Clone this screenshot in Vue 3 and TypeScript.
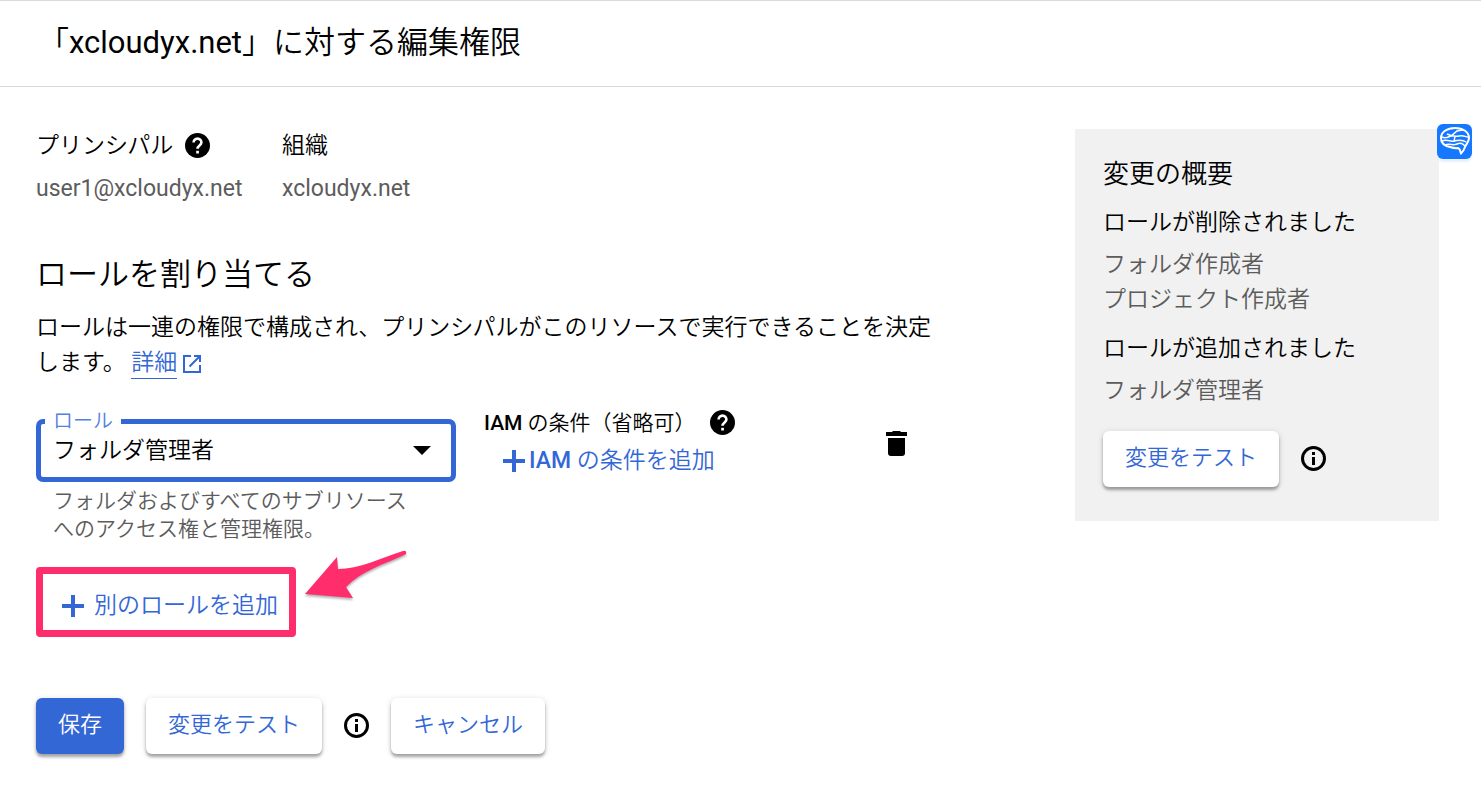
<script setup lang="ts">
import { ref } from 'vue'

const role = ref('フォルダ管理者')
const removedRoles: string[] = ['フォルダ作成者', 'プロジェクト作成者']
const addedRoles: string[] = ['フォルダ管理者']
</script>

<template>
  <div class="page">
    <header class="header">
      <h1 class="title">「<span class="latin">xcloudyx.net</span>」に対する編集権限</h1>
    </header>

    <div class="body">
      <main class="main">
        <dl class="facts">
          <div>
            <dt>
              プリンシパル
              <button class="icon-button" type="button" aria-label="プリンシパルのヘルプ">
                <svg class="round-icon" viewBox="0 0 25 25"><circle cx="12.5" cy="12.5" r="12.500" /><path class="mark" d="M8.600 9.500a3.900 3.900 0 0 1 7.800 0c0 2.800-3.900 3.100-3.900 6.300" /><path class="dot" d="M11.200 17.800h2.700v2.700h-2.700z" /></svg>
              </button>
            </dt>
            <dd class="latin">user1@xcloudyx.net</dd>
          </div>
          <div>
            <dt>組織</dt>
            <dd class="latin">xcloudyx.net</dd>
          </div>
        </dl>

        <h2 class="section-title">ロールを割り当てる</h2>
        <p class="description">
          ロールは一連の権限で構成され、プリンシパルがこのリソースで実行できることを決定します。
          <a class="link" href="#"><span class="link-text">詳細</span><svg class="external" viewBox="0 0 18 18"><path d="M8 1H1v16h16v-7M11 1h6v6M17 1L6.500 11.500" /></svg></a>
        </p>

        <div class="role-row">
          <div class="role">
            <div class="field">
              <label class="field-label" for="role">ロール</label>
              <select id="role" v-model="role" class="select">
                <option>フォルダ管理者</option>
              </select>
              <svg class="caret" viewBox="0 0 18 9"><path d="M0 0h18L9 9z" /></svg>
            </div>
            <p class="hint">フォルダおよびすべてのサブリソースへのアクセス権と管理権限。</p>
          </div>

          <div class="condition">
            <div class="condition-title">
              <span><span class="medium">IAM</span> の条件（省略可）</span>
              <button class="icon-button" type="button" aria-label="条件のヘルプ">
                <svg class="round-icon" viewBox="0 0 25 25"><circle cx="12.5" cy="12.5" r="12.500" /><path class="mark" d="M8.600 9.500a3.900 3.900 0 0 1 7.800 0c0 2.800-3.900 3.100-3.900 6.300" /><path class="dot" d="M11.200 17.800h2.700v2.700h-2.700z" /></svg>
              </button>
            </div>
            <button class="text-button add-condition" type="button">
              <svg class="plus" viewBox="0 0 22 22"><path d="M11 0v22M0 11h22" /></svg>
              <span><span class="medium">IAM</span> の条件を追加</span>
            </button>
          </div>

          <button class="icon-button delete" type="button" aria-label="ロールを削除">
            <svg class="trash" viewBox="0 0 21 25"><path d="M7 0h7l1 1h6v4H0V1h6zM2 7h17v15a3 3 0 0 1-3 3H5a3 3 0 0 1-3-3z" /></svg>
          </button>
        </div>

        <div class="callout">
          <button class="text-button add-role" type="button">
            <svg class="plus" viewBox="0 0 22 22"><path d="M11 0v22M0 11h22" /></svg>
            <span>別のロールを追加</span>
          </button>
          <svg class="arrow" viewBox="0 0 106 56" aria-hidden="true">
            <path d="M2 44L34 7l1 12C56 19 78 8 100 1q4-1 3 3C82 14 58 21 43 37l7 11z" />
          </svg>
        </div>

        <div class="actions">
          <button class="button primary" type="button">保存</button>
          <button class="button" type="button">変更をテスト</button>
          <button class="icon-button" type="button" aria-label="テストの詳細">
            <svg class="round-icon" viewBox="0 0 25 25"><circle class="ring" cx="12.5" cy="12.5" r="11" /><path d="M11 6h3v3h-3zM11 11h3v8h-3z" /></svg>
          </button>
          <button class="button" type="button">キャンセル</button>
        </div>
      </main>

      <aside class="summary">
        <h2 class="summary-title">変更の概要</h2>
        <h3 class="summary-heading">ロールが削除されました</h3>
        <ul class="roles">
          <li v-for="name in removedRoles" :key="name">{{ name }}</li>
        </ul>
        <h3 class="summary-heading added">ロールが追加されました</h3>
        <ul class="roles">
          <li v-for="name in addedRoles" :key="name">{{ name }}</li>
        </ul>
        <div class="actions summary-actions">
          <button class="button" type="button">変更をテスト</button>
          <button class="icon-button" type="button" aria-label="テストの詳細">
            <svg class="round-icon" viewBox="0 0 25 25"><circle class="ring" cx="12.5" cy="12.5" r="11" /><path d="M11 6h3v3h-3zM11 11h3v8h-3z" /></svg>
          </button>
        </div>
        <button class="assistant" type="button" aria-label="アシスタント">
          <svg viewBox="0 0 35 35">
            <path class="outline" d="M24 29.500c-1-2 0-4-3-5.500-3 .5-5 0-8-1-5-1-9-4-9-9C4 8 10 4 18 4s14 4 14 10c0 4-3 6-4 9-1 3-2 5-4 6.500z" />
            <path d="M5 13c4 2 6 0 9-1l6-5 6-1M10 10c4 2 7 3 12 2s6 1 9 1M5 17c6-2 8 1 12 0s8-2 12 1M8 21c5-2 8 1 12-1s6 0 8 2M18 12l-1 6" />
          </svg>
        </button>
      </aside>
    </div>
  </div>
</template>

<style>
body {
  margin: 0;
  background: #fff;
}
</style>

<style scoped>
.page {
  font-family: Roboto, "Noto Sans CJK JP", sans-serif;
  font-size: 23px;
  font-weight: 350;
  line-height: 35px;
  color: #000;
}
.page * {
  box-sizing: border-box;
}
h1, h2, h3, p, dl, dd, ul {
  margin: 0;
  padding: 0;
  font-weight: inherit;
}
button, select {
  margin: 0;
  font: inherit;
  color: inherit;
}
svg {
  display: block;
  flex: none;
}
.latin {
  font-weight: 400;
}
.medium {
  font-weight: 500;
}
.header {
  padding: 21px 38px 23px;
  border-top: 1px solid #dadada;
  border-bottom: 1px solid #dadada;
}
.title {
  font-size: 31px;
  line-height: 41px;
}
.body {
  display: grid;
  grid-template-columns: minmax(0, 1fr) 364px;
  align-items: start;
  gap: 132px;
  padding: 42px 42px 32px 36px;
}
.facts {
  display: grid;
  grid-template-columns: 246px auto;
  line-height: 34px;
}
.facts dt {
  display: flex;
  align-items: center;
  gap: 12px;
}
.facts dd {
  margin-top: 9px;
  color: #5c5c5c;
}
.icon-button {
  flex: none;
  padding: 0 0 2px;
  border: 0;
  background: none;
  cursor: pointer;
}
.round-icon {
  width: 25px;
  height: 25px;
}
.mark {
  fill: none;
  stroke: #fff;
  stroke-width: 2.600;
}
.dot {
  fill: #fff;
}
.ring {
  fill: none;
  stroke: #000;
  stroke-width: 3;
}
.section-title {
  margin-top: 49px;
  font-size: 31px;
  line-height: 40px;
}
.description {
  margin-top: 15px;
}
.link {
  display: inline-flex;
  align-items: center;
  gap: 6px;
  color: #3367d6;
  text-decoration: none;
}
.link-text {
  line-height: 30px;
  border-bottom: 1px solid #3367d6;
}
.external {
  width: 18px;
  height: 18px;
  fill: none;
  stroke: #3367d6;
  stroke-width: 2;
}
.role-row {
  display: flex;
  margin-top: 39px;
}
.role {
  width: 420px;
}
.field {
  position: relative;
}
.field-label {
  position: absolute;
  top: -10px;
  left: 9px;
  padding: 0 8px;
  background: #fff;
  color: #5580e0;
  font-size: 20px;
  line-height: 24px;
}
.select {
  display: block;
  width: 100%;
  height: 63px;
  padding: 0 40px 0 12px;
  border: 5px solid #3367d6;
  border-radius: 7px;
  outline: 0;
  background: #fff;
  appearance: none;
}
.caret {
  position: absolute;
  top: 27px;
  right: 25px;
  width: 18px;
  height: 9px;
  pointer-events: none;
}
.hint {
  margin-top: 5px;
  padding: 0 40px 0 17px;
  color: #5c5c5c;
  font-size: 21px;
  line-height: 28px;
}
.condition {
  flex: 1;
  padding-left: 28px;
}
.condition-title {
  display: flex;
  align-items: center;
  gap: 14px;
  margin-top: -10px;
  font-size: 21px;
  line-height: 28px;
}
.text-button {
  display: flex;
  align-items: center;
  padding: 0;
  border: 0;
  background: none;
  color: #3367d6;
  cursor: pointer;
}
.plus {
  width: 22px;
  height: 22px;
  stroke: #3367d6;
  stroke-width: 4;
}
.add-condition {
  gap: 4px;
  margin: 6px 0 0 19px;
}
.delete {
  align-self: flex-start;
  margin: 12px 36px 0 0;
}
.trash {
  width: 21px;
  height: 25px;
}
.callout {
  position: relative;
  width: fit-content;
  margin-top: 24px;
  border: 7px solid #ff2d6c;
  border-radius: 4px;
}
.add-role {
  gap: 10px;
  height: 56px;
  padding: 7px 11px 0 19px;
}
.arrow {
  position: absolute;
  top: -24px;
  left: calc(100% + 14px);
  width: 106px;
  height: 56px;
  fill: #ff2d6c;
  filter: drop-shadow(0 2px 1px rgba(0, 0, 0, 0.3));
}
.actions {
  display: flex;
  align-items: center;
  gap: 22px;
  margin-top: 61px;
}
.button {
  height: 56px;
  padding: 0 22px 3px;
  border: 0;
  border-radius: 6px;
  background: #fff;
  color: #3367d6;
  font-size: 22px;
  box-shadow: 0 3px 3px rgba(0, 0, 0, 0.3), 0 1px 6px rgba(0, 0, 0, 0.14);
  cursor: pointer;
}
.primary {
  background: #3367d6;
  color: #fff;
}
.summary {
  position: relative;
  padding: 28px 28px 34px;
  background: #f1f1f1;
}
.summary-title {
  font-size: 26px;
  line-height: 34px;
}
.summary-heading {
  margin-top: 14px;
  font-size: inherit;
}
.roles {
  margin-top: 7px;
  color: #5c5c5c;
  list-style: none;
}
.summary-actions {
  margin-top: 23px;
}
.assistant {
  position: absolute;
  top: -5px;
  right: -33px;
  width: 35px;
  height: 35px;
  padding: 0;
  border: 0;
  border-radius: 6px;
  background: #1677ff;
  box-shadow: 0 3px 2px #e6f2ff;
}
.assistant svg {
  width: 35px;
  height: 35px;
  fill: none;
  stroke: #fff;
  stroke-width: 1.500;
}
.assistant .outline {
  stroke-width: 2;
}
</style>
